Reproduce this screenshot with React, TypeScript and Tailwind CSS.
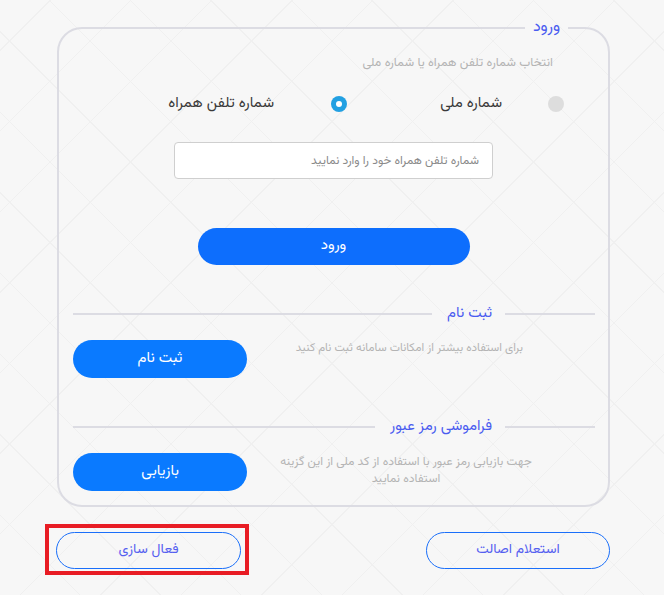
import React from "react";

const font = `font-['Vazirmatn','Noto_Sans_Arabic','DejaVu_Sans',sans-serif]`;

function Divider({ title }: { title: string }) {
  return (
    <div className="flex items-center">
      <div className="w-[90px] h-[2px] bg-[#dcdce3]" />
      <div className="mx-[13px] text-[15px] leading-[24px] text-[#4a5cf0]">{title}</div>
      <div className="flex-1 h-[2px] bg-[#dcdce3] ms-[2px]" />
    </div>
  );
}

export default function App() {
  return (
    <div
      dir="rtl"
      className={`${font} w-[664px] h-[595px] overflow-hidden bg-[#f7f7f7] [background-image:repeating-linear-gradient(45deg,transparent_0_56px,#f0f0f0_56px_57px),repeating-linear-gradient(-45deg,transparent_0_56px,#f0f0f0_56px_57px)]`}
    >
      <div className="pt-[16px] pr-[54px] pl-[57px]">
        <fieldset className="border-2 border-[#dcdce3] rounded-[25px] px-0 pb-[14px] m-0">
          <legend className="mr-[40px] px-[8px] text-[16px] leading-[24px] text-[#4a5cf0]">ورود</legend>

          <div className="pr-[55px] mt-[13px] text-[12.5px] leading-[20px] text-[#b4b4b4]">
            انتخاب شماره تلفن همراه یا شماره ملی
          </div>

          <div className="flex items-center pr-[44px] mt-[19px] h-[24px]">
            <div className="flex items-center w-[217px]">
              <span className="w-[16px] h-[16px] rounded-full bg-[#dddddd] shrink-0" />
              <span className="ms-[46px] text-[15px] font-normal text-[#3a3a3a]">شماره ملی</span>
            </div>
            <div className="flex items-center">
              <span className="w-[16px] h-[16px] rounded-full bg-[#22a0e2] shrink-0 flex items-center justify-center">
                <span className="w-[6px] h-[6px] rounded-full bg-white" />
              </span>
              <span className="ms-[57px] text-[15px] font-normal text-[#3a3a3a]">شماره تلفن همراه</span>
            </div>
          </div>

          <div className="flex justify-center mt-[26px]">
            <div className="w-[319px] h-[37px] bg-white border border-[#cfcfcf] rounded-[4px] flex items-center pr-[13px] text-[12px] text-[#8a8a8a]">
              شماره تلفن همراه خود را وارد نمایید
            </div>
          </div>

          <div className="flex justify-center mt-[49px]">
            <button className="w-[272px] h-[37px] rounded-full bg-[#0d6efd] text-white text-[15px]">ورود</button>
          </div>

          <div className="pr-[13px] pl-[14px] mt-[37px]">
            <Divider title="ثبت نام" />
            <div className="flex items-start justify-between mt-[14px]">
              <div className="mr-[72px] text-[11.6px] leading-[17px] text-[#b4b4b4]">
                برای استفاده بیشتر از امکانات سامانه ثبت نام کنید
              </div>
              <button className="w-[174px] h-[38px] rounded-full bg-[#0a7aff] text-white text-[15px]">ثبت نام</button>
            </div>

            <div className="mt-[37px]">
              <Divider title="فراموشی رمز عبور" />
            </div>
            <div className="flex items-start justify-between mt-[14px]">
              <div className="mr-[58px] w-[262px] pt-[1px] text-center text-[12px] leading-[17px] text-[#b4b4b4]">
                جهت بازیابی رمز عبور با استفاده از کد ملی از این گزینه استفاده نمایید
              </div>
              <button className="w-[174px] h-[38px] rounded-full bg-[#0a7aff] text-white text-[15px]">بازیابی</button>
            </div>
          </div>
        </fieldset>

        <div className="flex justify-between mt-[25px] ml-[-1px]">
          <button className="w-[184px] h-[37px] rounded-full border border-[#1a6ffa] text-[#5560f0] text-[14px]">
            استعلام اصالت
          </button>
          <div className="relative">
            <button className="w-[185px] h-[37px] rounded-full border border-[#1a6ffa] text-[#5560f0] text-[14px]">
              فعال سازی
            </button>
            <span className="absolute top-[-8px] bottom-[-6px] left-[-11px] right-[-8px] border-4 border-[#e81c24] pointer-events-none" />
          </div>
        </div>
      </div>
    </div>
  );
}
